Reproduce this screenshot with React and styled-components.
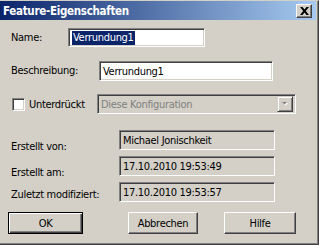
import React from "react";
import styled, { createGlobalStyle } from "styled-components";

const GlobalStyle = createGlobalStyle`
  html, body {
    margin: 0;
    padding: 0;
    background: #d4d0c8;
  }
  body {
    font-family: "DejaVu Sans Condensed", "Liberation Sans", Arial, sans-serif;
    font-size: 11px;
    letter-spacing: -0.3px;
  }
`;

const FACE = "#d4d0c8";

const Window = styled.div`
  width: 319px;
  height: 245px;
  box-sizing: border-box;
  background: ${FACE};
  border-top: 1px solid ${FACE};
  border-right: 1px solid #404040;
  border-bottom: 1px solid #404040;
  box-shadow: inset -1px -1px #808080;
  display: flex;
  flex-direction: column;
  overflow: hidden;
`;

const TitleBar = styled.div`
  height: 19px;
  margin-right: 2px;
  background: linear-gradient(to right, #0a246a, #a6caf0);
  display: flex;
  align-items: center;
  justify-content: space-between;
  padding: 0 4px 0 3px;
`;

const Title = styled.span`
  color: #fff;
  font-weight: bold;
  font-size: 11.5px;
  letter-spacing: -0.3px;
`;

const CloseButton = styled.div`
  width: 16px;
  height: 14px;
  box-sizing: border-box;
  background: ${FACE};
  border: 1px solid;
  border-color: #fff #404040 #404040 #fff;
  box-shadow: inset -1px -1px #808080;
  display: flex;
  align-items: center;
  justify-content: center;
`;

const Body = styled.div`
  display: flex;
  flex-direction: column;
  padding: 8px 0 0 11px;
`;

const Row = styled.div`
  display: flex;
  align-items: ${(p) => (p.$top ? "flex-start" : "center")};
  margin-top: ${(p) => p.$gap || 0}px;
`;

const Label = styled.span`
  width: ${(p) => p.$w}px;
  flex-shrink: 0;
  color: #000;
  line-height: 14px;
  padding-top: ${(p) => p.$drop || 0}px;
  margin-bottom: -${(p) => p.$drop || 0}px;
`;

const Sunken = styled.div`
  width: ${(p) => p.$w}px;
  height: ${(p) => p.$h}px;
  box-sizing: border-box;
  border: 1px solid;
  border-color: #808080 #fff #fff #808080;
  box-shadow: inset 1px 1px #404040, inset -1px -1px ${FACE};
  background: ${(p) => (p.$white ? "#fff" : FACE)};
  display: flex;
  align-items: center;
  padding-left: 3px;
  color: ${(p) => (p.$disabled ? "#808080" : "#000")};
  white-space: nowrap;
`;

const Selected = styled.span`
  background: #0a246a;
  color: #fff;
  padding: 0 1px;
  line-height: 14px;
`;

const CheckRow = styled.label`
  display: flex;
  align-items: center;
  width: 85px;
  margin-left: 1px;
`;

const CheckBox = styled.span`
  width: 13px;
  height: 13px;
  box-sizing: border-box;
  background: #fff;
  border: 1px solid;
  border-color: #808080 #fff #fff #808080;
  box-shadow: inset 1px 1px #404040, inset -1px -1px ${FACE};
  margin-right: 4px;
`;

const Combo = styled(Sunken)`
  justify-content: space-between;
  padding-right: 2px;
`;

const DropButton = styled.span`
  width: 16px;
  height: 16px;
  box-sizing: border-box;
  background: ${FACE};
  border: 1px solid;
  border-color: ${FACE} #404040 #404040 ${FACE};
  box-shadow: inset 1px 1px #fff, inset -1px -1px #808080;
  display: flex;
  align-items: center;
  justify-content: center;
`;

const Buttons = styled.div`
  display: flex;
  margin-top: 10px;
  margin-left: -3px;
`;

const Button = styled.div`
  width: ${(p) => p.$w}px;
  height: 22px;
  margin-left: ${(p) => p.$ml || 0}px;
  box-sizing: border-box;
  background: ${FACE};
  border: 1px solid;
  border-color: ${(p) =>
    p.$default ? "#000" : "#fff #404040 #404040 #fff"};
  box-shadow: ${(p) =>
    p.$default
      ? "inset 1px 1px #fff, inset -1px -1px #404040, inset -2px -2px #808080"
      : "inset -1px -1px #808080"};
  display: flex;
  align-items: center;
  justify-content: center;
  color: #000;
`;

export default function App() {
  return (
    <>
      <GlobalStyle />
      <Window>
        <TitleBar>
          <Title>Feature-Eigenschaften</Title>
          <CloseButton>
            <svg width="9" height="8" viewBox="0 0 9 8">
              <path d="M0 0h2.5L4.5 2.5 6.5 0H9L5.8 4 9 8H6.5L4.5 5.5 2.5 8H0l3.2-4z" fill="#000" />
            </svg>
          </CloseButton>
        </TitleBar>
        <Body>
          <Row>
            <Label $w={57}>Name:</Label>
            <Sunken $w={137} $h={19} $white>
              <Selected>Verrundung1</Selected>
            </Sunken>
          </Row>
          <Row $gap={14}>
            <Label $w={88}>Beschreibung:</Label>
            <Sunken $w={174} $h={20} $white>
              Verrundung1
            </Sunken>
          </Row>
          <Row $gap={13}>
            <CheckRow>
              <CheckBox />
              Unterdrückt
            </CheckRow>
            <Combo $w={199} $h={20} $disabled>
              Diese Konfiguration
              <DropButton>
                <svg width="7" height="5" viewBox="0 0 7 5">
                  <path d="M1 1h5L3.5 3.5z" fill="#fff" />
                  <path d="M0 0h5L2.5 2.5z" fill="#808080" />
                </svg>
              </DropButton>
            </Combo>
          </Row>
          <Row $gap={16} $top>
            <Label $w={108} $drop={10}>Erstellt von:</Label>
            <Sunken $w={156} $h={20}>Michael Jonischkeit</Sunken>
          </Row>
          <Row $gap={6} $top>
            <Label $w={108} $drop={10}>Erstellt am:</Label>
            <Sunken $w={156} $h={20}>17.10.2010 19:53:49</Sunken>
          </Row>
          <Row $gap={6} $top>
            <Label $w={108} $drop={6}>Zuletzt modifiziert:</Label>
            <Sunken $w={156} $h={20}>17.10.2010 19:53:57</Sunken>
          </Row>
          <Buttons>
            <Button $w={75} $default>OK</Button>
            <Button $w={70} $ml={45}>Abbrechen</Button>
            <Button $w={72} $ml={26}>Hilfe</Button>
          </Buttons>
        </Body>
      </Window>
    </>
  );
}
